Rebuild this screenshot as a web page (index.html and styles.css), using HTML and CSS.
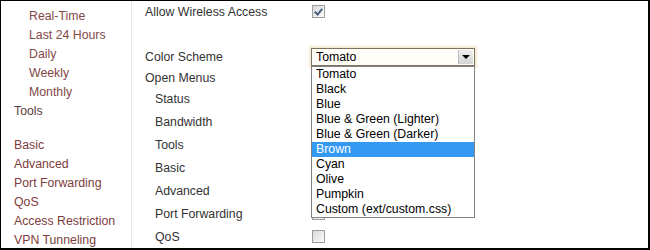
FILE: index.html
```html
<!DOCTYPE html>
<html>
<head>
<meta charset="utf-8">
<link rel="stylesheet" href="styles.css">
</head>
<body>
<div class="frame">
  <nav class="side">
    <a class="sub">Real-Time</a>
    <a class="sub">Last 24 Hours</a>
    <a class="sub">Daily</a>
    <a class="sub">Weekly</a>
    <a class="sub">Monthly</a>
    <span class="head">Tools</span>
    <a class="top gap">Basic</a>
    <a class="top">Advanced</a>
    <a class="top">Port Forwarding</a>
    <a class="top">QoS</a>
    <a class="top">Access Restriction</a>
    <a class="top">VPN Tunneling</a>
  </nav>
  <main class="main">
    <div class="row r22"><span class="label">Allow Wireless Access</span><span class="cb checked"></span></div>
    <div class="row r23"></div>
    <div class="row r22 sel-row"><span class="label">Color Scheme</span>
      <div class="select">
        <span class="select-text">Tomato</span>
        <span class="arrow"></span>
        <ul class="list">
          <li>Tomato</li>
          <li>Black</li>
          <li>Blue</li>
          <li>Blue &amp; Green (Lighter)</li>
          <li>Blue &amp; Green (Darker)</li>
          <li class="hl">Brown</li>
          <li>Cyan</li>
          <li>Olive</li>
          <li>Pumpkin</li>
          <li>Custom (ext/custom.css)</li>
        </ul>
      </div>
    </div>
    <div class="row r20"><span class="label">Open Menus</span></div>
    <div class="row r23"><span class="label in">Status</span><span class="cb"></span></div>
    <div class="row r23"><span class="label in">Bandwidth</span><span class="cb"></span></div>
    <div class="row r23"><span class="label in">Tools</span><span class="cb"></span></div>
    <div class="row r23"><span class="label in">Basic</span><span class="cb"></span></div>
    <div class="row r23"><span class="label in">Advanced</span><span class="cb"></span></div>
    <div class="row r23"><span class="label in">Port Forwarding</span><span class="cb"></span></div>
    <div class="row r23"><span class="label in">QoS</span><span class="cb"></span></div>
  </main>
</div>
</body>
</html>
```
FILE: styles.css
```css
html, body { margin: 0; padding: 0; background: #fff; }
.frame {
  width: 650px; height: 250px; box-sizing: border-box;
  border-style: solid; border-color: #000; border-width: 1px 2px 2px 1px;
  display: flex; overflow: hidden;
  font-family: "Liberation Sans", Arial, sans-serif; font-size: 12.3px;
  background: #fff;
}
.side {
  width: 130px; flex: none; border-right: 1px solid #e6e6e6;
  display: flex; flex-direction: column; padding-top: 6px;
}
.side a, .side span { display: block; line-height: 19px; height: 19px; white-space: nowrap; }
.sub { padding-left: 28px; color: #834848; }
.head { padding-left: 13px; color: #5e3e3e; }
.top { padding-left: 13px; color: #7e3c3c; }
.gap { margin-top: 15px; }
.main { flex: 1; display: flex; flex-direction: column; color: #333; }
.row { display: flex; align-items: center; padding-left: 13px; }
.r20 { height: 20px; }
.r22 { height: 22px; }
.r23 { height: 23px; }
.label { width: 166px; flex: none; white-space: nowrap; }
.label.in { width: 156px; padding-left: 10px; }
.cb {
  width: 11px; height: 11px; border: 1px solid #9c9c9c;
  background: linear-gradient(135deg, #d8d8d8 0%, #f2f2f2 70%, #fff 100%);
  position: relative; margin-left: 1px;
}
.cb.checked::after {
  content: ""; position: absolute; left: 3px; top: 1px; width: 3px; height: 6px;
  border: solid #4b5d7e; border-width: 0 2px 2px 0; transform: rotate(40deg);
}
.sel-row { position: relative; }
.select {
  position: relative; width: 162px; height: 16px;
  border: 1px solid #7d725f; background: #fffdf8;
  box-shadow: 0 0 2px 2px #f3ead2;
  display: flex; align-items: center; z-index: 2;
}
.select-text { padding-left: 4px; color: #000; flex: 1; }
.arrow {
  width: 14px; height: 14px; margin-right: 1px;
  background: linear-gradient(#efefef, #d4d4d4);
  border-left: 1px solid #bbb; position: relative;
}
.arrow::after {
  content: ""; position: absolute; left: 3px; top: 5px;
  border-left: 4px solid transparent; border-right: 4px solid transparent; border-top: 4px solid #000;
}
.list {
  position: absolute; left: -1px; top: 17px; margin: 0; padding: 0; list-style: none;
  width: 162px; border: 1px solid #828282; background: #fff;
}
.list li { height: 15px; line-height: 15px; padding-left: 4px; color: #000; white-space: nowrap; }
.list li.hl { background: #3399f3; color: #fff; }
```
